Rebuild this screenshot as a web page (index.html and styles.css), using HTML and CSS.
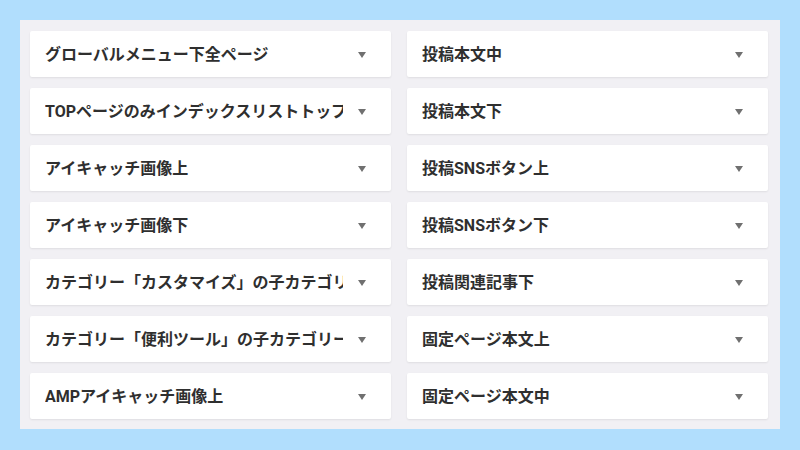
FILE: index.html
```html
<!DOCTYPE html>
<html lang="ja">
<head>
<meta charset="utf-8">
<link rel="stylesheet" href="styles.css">
</head>
<body>
<div class="panel">
  <div class="card"><span class="label">グローバルメニュー下全ページ</span><span class="arrow"></span></div>
  <div class="card"><span class="label">投稿本文中</span><span class="arrow"></span></div>
  <div class="card"><span class="label">TOPページのみインデックスリストトップ</span><span class="arrow"></span></div>
  <div class="card"><span class="label">投稿本文下</span><span class="arrow"></span></div>
  <div class="card"><span class="label">アイキャッチ画像上</span><span class="arrow"></span></div>
  <div class="card"><span class="label">投稿SNSボタン上</span><span class="arrow"></span></div>
  <div class="card"><span class="label">アイキャッチ画像下</span><span class="arrow"></span></div>
  <div class="card"><span class="label">投稿SNSボタン下</span><span class="arrow"></span></div>
  <div class="card"><span class="label">カテゴリー「カスタマイズ」の子カテゴリー</span><span class="arrow"></span></div>
  <div class="card"><span class="label">投稿関連記事下</span><span class="arrow"></span></div>
  <div class="card"><span class="label">カテゴリー「便利ツール」の子カテゴリー</span><span class="arrow"></span></div>
  <div class="card"><span class="label">固定ページ本文上</span><span class="arrow"></span></div>
  <div class="card"><span class="label">AMPアイキャッチ画像上</span><span class="arrow"></span></div>
  <div class="card"><span class="label">固定ページ本文中</span><span class="arrow"></span></div>
</div>
</body>
</html>
```
FILE: styles.css
```css
html, body {
  margin: 0;
  padding: 0;
}
body {
  width: 800px;
  height: 450px;
  background: #b1defd;
  padding: 20px;
  box-sizing: border-box;
  font-family: Roboto, "Noto Sans CJK JP", sans-serif;
}
.panel {
  width: 760px;
  height: 409px;
  box-sizing: border-box;
  background: #f1f0f4;
  padding: 11px 12px 11px 10px;
  display: grid;
  grid-template-columns: 361px 361px;
  grid-auto-rows: 46px;
  column-gap: 16px;
  row-gap: 11px;
}
.card {
  background: #ffffff;
  border-radius: 2px;
  box-shadow: 0 1px 2px rgba(0, 0, 0, 0.08);
  display: flex;
  align-items: center;
  padding: 0 25px 2px 15px;
}
.label {
  flex: 1;
  overflow: hidden;
  white-space: nowrap;
  font-size: 16px;
  font-weight: 700;
  color: #2f2f2f;
  margin-right: 15px;
}
.arrow {
  width: 0;
  height: 0;
  border-left: 4px solid transparent;
  border-right: 4px solid transparent;
  border-top: 6px solid #707070;
  margin-top: 4px;
}
```
